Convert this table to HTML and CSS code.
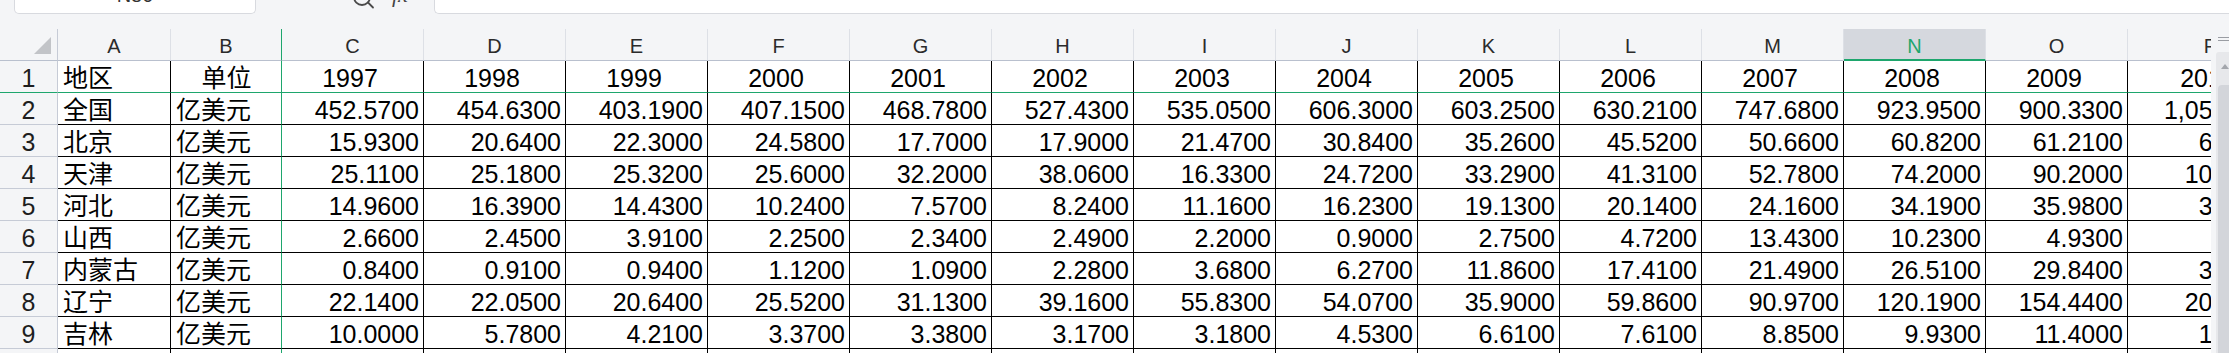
FILE: index.html
```html
<!DOCTYPE html>
<html lang="zh-CN">
<head>
<meta charset="utf-8">
<title>Sheet</title>
<link rel="stylesheet" href="styles.css">
</head>
<body>
<div class="topbar">
  <div class="namebox"><span>N80</span></div>
  <div class="fxzone">
    <svg class="mag" width="28" height="14" viewBox="0 0 28 14"><circle cx="12" cy="-3" r="8" fill="none" stroke="#4a4a4a" stroke-width="1.8"/><line x1="18" y1="2.5" x2="23" y2="7.5" stroke="#4a4a4a" stroke-width="1.8" stroke-linecap="round"/></svg>
    <span class="fx">fx</span>
  </div>
  <div class="formula"></div>
</div>
<div class="sheet">
  <div class="gridwrap">
    <div class="grid">
      <div class="corner"><div class="tri"></div></div>
      <div class="hd">A</div><div class="hd fz">B</div><div class="hd">C</div><div class="hd">D</div><div class="hd">E</div><div class="hd">F</div><div class="hd">G</div><div class="hd">H</div><div class="hd">I</div><div class="hd">J</div><div class="hd">K</div><div class="hd">L</div><div class="hd">M</div><div class="hd sel">N</div><div class="hd">O</div><div class="hd">P</div>

      <div class="rh r1">1</div>
      <div class="c l r1">地区</div><div class="c ctr r1 fz">单位</div>
      <div class="c yr r1">1997</div><div class="c yr r1">1998</div><div class="c yr r1">1999</div><div class="c yr r1">2000</div><div class="c yr r1">2001</div><div class="c yr r1">2002</div><div class="c yr r1">2003</div><div class="c yr r1">2004</div><div class="c yr r1">2005</div><div class="c yr r1">2006</div><div class="c yr r1">2007</div><div class="c yr r1">2008</div><div class="c yr r1">2009</div><div class="c yr r1">2010</div>

      <div class="rh">2</div>
      <div class="c l">全国</div><div class="c l fz">亿美元</div>
      <div class="c r">452.5700</div><div class="c r">454.6300</div><div class="c r">403.1900</div><div class="c r">407.1500</div><div class="c r">468.7800</div><div class="c r">527.4300</div><div class="c r">535.0500</div><div class="c r">606.3000</div><div class="c r">603.2500</div><div class="c r">630.2100</div><div class="c r">747.6800</div><div class="c r">923.9500</div><div class="c r">900.3300</div><div class="c r">1,057.3500</div>

      <div class="rh">3</div>
      <div class="c l">北京</div><div class="c l fz">亿美元</div>
      <div class="c r">15.9300</div><div class="c r">20.6400</div><div class="c r">22.3000</div><div class="c r">24.5800</div><div class="c r">17.7000</div><div class="c r">17.9000</div><div class="c r">21.4700</div><div class="c r">30.8400</div><div class="c r">35.2600</div><div class="c r">45.5200</div><div class="c r">50.6600</div><div class="c r">60.8200</div><div class="c r">61.2100</div><div class="c r">63.6400</div>

      <div class="rh">4</div>
      <div class="c l">天津</div><div class="c l fz">亿美元</div>
      <div class="c r">25.1100</div><div class="c r">25.1800</div><div class="c r">25.3200</div><div class="c r">25.6000</div><div class="c r">32.2000</div><div class="c r">38.0600</div><div class="c r">16.3300</div><div class="c r">24.7200</div><div class="c r">33.2900</div><div class="c r">41.3100</div><div class="c r">52.7800</div><div class="c r">74.2000</div><div class="c r">90.2000</div><div class="c r">105.8900</div>

      <div class="rh">5</div>
      <div class="c l">河北</div><div class="c l fz">亿美元</div>
      <div class="c r">14.9600</div><div class="c r">16.3900</div><div class="c r">14.4300</div><div class="c r">10.2400</div><div class="c r">7.5700</div><div class="c r">8.2400</div><div class="c r">11.1600</div><div class="c r">16.2300</div><div class="c r">19.1300</div><div class="c r">20.1400</div><div class="c r">24.1600</div><div class="c r">34.1900</div><div class="c r">35.9800</div><div class="c r">38.3000</div>

      <div class="rh">6</div>
      <div class="c l">山西</div><div class="c l fz">亿美元</div>
      <div class="c r">2.6600</div><div class="c r">2.4500</div><div class="c r">3.9100</div><div class="c r">2.2500</div><div class="c r">2.3400</div><div class="c r">2.4900</div><div class="c r">2.2000</div><div class="c r">0.9000</div><div class="c r">2.7500</div><div class="c r">4.7200</div><div class="c r">13.4300</div><div class="c r">10.2300</div><div class="c r">4.9300</div><div class="c r">7.1400</div>

      <div class="rh">7</div>
      <div class="c l">内蒙古</div><div class="c l fz">亿美元</div>
      <div class="c r">0.8400</div><div class="c r">0.9100</div><div class="c r">0.9400</div><div class="c r">1.1200</div><div class="c r">1.0900</div><div class="c r">2.2800</div><div class="c r">3.6800</div><div class="c r">6.2700</div><div class="c r">11.8600</div><div class="c r">17.4100</div><div class="c r">21.4900</div><div class="c r">26.5100</div><div class="c r">29.8400</div><div class="c r">33.9500</div>

      <div class="rh">8</div>
      <div class="c l">辽宁</div><div class="c l fz">亿美元</div>
      <div class="c r">22.1400</div><div class="c r">22.0500</div><div class="c r">20.6400</div><div class="c r">25.5200</div><div class="c r">31.1300</div><div class="c r">39.1600</div><div class="c r">55.8300</div><div class="c r">54.0700</div><div class="c r">35.9000</div><div class="c r">59.8600</div><div class="c r">90.9700</div><div class="c r">120.1900</div><div class="c r">154.4400</div><div class="c r">206.2600</div>

      <div class="rh">9</div>
      <div class="c l">吉林</div><div class="c l fz">亿美元</div>
      <div class="c r">10.0000</div><div class="c r">5.7800</div><div class="c r">4.2100</div><div class="c r">3.3700</div><div class="c r">3.3800</div><div class="c r">3.1700</div><div class="c r">3.1800</div><div class="c r">4.5300</div><div class="c r">6.6100</div><div class="c r">7.6100</div><div class="c r">8.8500</div><div class="c r">9.9300</div><div class="c r">11.4000</div><div class="c r">16.7300</div>

      <div class="rh">10</div>
      <div class="c l">黑龙江</div><div class="c l fz">亿美元</div>
      <div class="c r">5.1200</div><div class="c r">4.9800</div><div class="c r">4.7700</div><div class="c r">4.9300</div><div class="c r">5.5800</div><div class="c r">5.8600</div><div class="c r">6.2100</div><div class="c r">7.7300</div><div class="c r">9.0500</div><div class="c r">12.8400</div><div class="c r">17.2100</div><div class="c r">22.9600</div><div class="c r">20.7600</div><div class="c r">28.4500</div>
    </div>
  </div>
  <div class="vscroll">
    <div class="split"><i></i><i></i></div>
    <div class="track">
      <div class="uparrow"><div class="arr"></div></div>
      <div class="thumb"></div>
    </div>
  </div>
</div>
</body>
</html>
```

FILE: styles.css
```css
* { box-sizing: border-box; margin: 0; padding: 0; }
html, body { width: 2229px; height: 353px; overflow: hidden; background: #f4f5f7; }
body { font-family: "Liberation Sans", "Noto Sans CJK SC", sans-serif; color: #000; }

.topbar { height: 29px; display: flex; align-items: flex-start; }
.namebox {
  margin-left: 14px; width: 242px; height: 14px; background: #fff;
  border: 1px solid #d8dadf; border-top: none; border-radius: 0 0 5px 5px;
  overflow: hidden; text-align: center; font-size: 20px; line-height: 20px; color: #333;
}
.namebox span { display: block; margin-top: -15px; }
.fxzone { width: 178px; height: 14px; overflow: hidden; display: flex; align-items: flex-start; }
.mag { margin-left: 94px; flex: none; }
.fx {
  margin-left: 14px; margin-top: -15px; font-family: "Liberation Serif", serif;
  font-style: italic; font-size: 22px; line-height: 20px; color: #444;
}
.formula {
  flex: 1; height: 14px; background: #fff; border: 1px solid #d8dadf;
  border-top: none; border-right: none; border-radius: 0 0 0 5px;
}

.sheet { display: flex; height: 324px; }
.gridwrap { width: 2211px; overflow: hidden; flex: none; }
.grid {
  display: grid; width: 2294px;
  grid-template-columns: 58px 113px 111px repeat(13, 142px) 166px;
  grid-auto-rows: 32px;
}

.corner {
  background: #f4f5f7; border-right: 1px solid #c6cbd6; border-bottom: 1px solid #b9c0ce;
  display: flex; justify-content: flex-end; align-items: flex-end; padding: 0 6px 6px 0;
}
.tri { width: 17px; height: 17px; background: #c2c4c8; clip-path: polygon(100% 0, 100% 100%, 0 100%); }

.hd {
  background: #f4f5f7; border-right: 1px solid #dde0e6; border-bottom: 1px solid #b9c0ce;
  text-align: center; font-size: 20px; line-height: 31px; padding-top: 2px; color: #2b2b2b;
  overflow: hidden;
}
.hd.sel { background: #d5d8de; color: #1ea66d; border-bottom: 2px solid #1ea66d; }

.rh {
  background: #f4f5f7; border-right: 1px solid #c6cbd6; border-bottom: 1px solid #c6cbd6;
  text-align: center; font-size: 25px; line-height: 32px; padding-top: 1px; color: #1e1e1e;
  overflow: hidden;
}

.c {
  background: #fff; border-right: 1px solid #000; border-bottom: 1px solid #000;
  font-size: 25px; line-height: 32px; padding: 1px 4px 0 5px; white-space: nowrap; overflow: hidden;
}
.l { text-align: left; }
.r { text-align: right; }
.ctr { text-align: center; }
.yr { text-align: center; padding-right: 10px; }

.r1 { border-bottom-color: #1ea66d; }
.fz { border-right-color: #1ea66d; }

.vscroll { width: 18px; flex: none; display: flex; flex-direction: column; background: #f4f5f7; }
.split { height: 23px; display: flex; flex-direction: column; padding: 8px 0 0 7px; gap: 2px; }
.split i { display: block; width: 11px; height: 1px; background: #9a9da3; }
.track { flex: 1; margin-left: 5px; background: #e7e8eb; border-radius: 3px 0 0 0; display: flex; flex-direction: column; }
.uparrow { height: 33px; padding: 12px 0 0 5px; }
.arr { width: 8px; height: 5px; background: #a3a6ac; clip-path: polygon(50% 0, 100% 100%, 0 100%); }
.thumb { flex: 1; margin-left: 2px; background: #d3d5da; border-radius: 4px 0 0 0; }
```
